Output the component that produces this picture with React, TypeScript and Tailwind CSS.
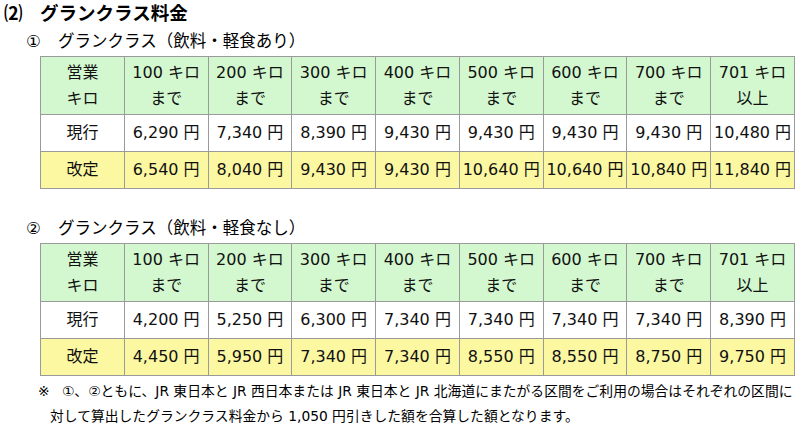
import React from 'react';

const FONT = "font-['DejaVu_Sans','Noto_Sans_CJK_JP',sans-serif]";

const HEADERS: [string, string][] = [
  ['100 キロ', 'まで'],
  ['200 キロ', 'まで'],
  ['300 キロ', 'まで'],
  ['400 キロ', 'まで'],
  ['500 キロ', 'まで'],
  ['600 キロ', 'まで'],
  ['700 キロ', 'まで'],
  ['701 キロ', '以上'],
];

interface FareTableProps {
  current: string[];
  revised: string[];
}

function FareTable({ current, revised }: FareTableProps) {
  const cell = 'border border-[#9a9a9a] text-center whitespace-nowrap p-0';
  return (
    <table className="table-fixed border-collapse w-[755px] ml-[40px] text-[16px] text-[#111]">
      <tbody>
        <tr className="bg-[#d3f8cf] h-[58px]">
          <td className={`${cell} leading-[26px]`}>
            <div>営業</div>
            <div>キロ</div>
          </td>
          {HEADERS.map(([a, b]) => (
            <td key={a} className={`${cell} leading-[26px]`}>
              <div>{a}</div>
              <div>{b}</div>
            </td>
          ))}
        </tr>
        <tr className="bg-white h-[37px]">
          <td className={cell}>現行</td>
          {current.map((v, i) => (
            <td key={i} className={cell}>{v}</td>
          ))}
        </tr>
        <tr className="bg-[#fcf8a2] h-[37px]">
          <td className={cell}>改定</td>
          {revised.map((v, i) => (
            <td key={i} className={cell}>{v}</td>
          ))}
        </tr>
      </tbody>
    </table>
  );
}

export default function App() {
  return (
    <div className={`${FONT} w-[800px] h-[426px] bg-white text-black overflow-hidden`}>
      <div className="flex items-center h-[28px] pl-[4px] text-[18.5px] font-bold">
        <span className="w-[36px]">⑵</span>
        <span>グランクラス料金</span>
      </div>
      <div className="flex items-center h-[28px] pl-[26px] text-[16.5px]">
        <span className="w-[32px]">①</span>
        <span>グランクラス（飲料・軽食あり）</span>
      </div>
      <FareTable
        current={['6,290 円', '7,340 円', '8,390 円', '9,430 円', '9,430 円', '9,430 円', '9,430 円', '10,480 円']}
        revised={['6,540 円', '8,040 円', '9,430 円', '9,430 円', '10,640 円', '10,640 円', '10,840 円', '11,840 円']}
      />
      <div className="flex items-center h-[28px] mt-[26px] pl-[26px] text-[16.5px]">
        <span className="w-[32px]">②</span>
        <span>グランクラス（飲料・軽食なし）</span>
      </div>
      <FareTable
        current={['4,200 円', '5,250 円', '6,300 円', '7,340 円', '7,340 円', '7,340 円', '7,340 円', '8,390 円']}
        revised={['4,450 円', '5,950 円', '7,340 円', '7,340 円', '8,550 円', '8,550 円', '8,750 円', '9,750 円']}
      />
      <div className="pl-[38px] pt-[3px] text-[13.8px] leading-[25px]">
        <div className="flex">
          <span className="w-[24px]">※</span>
          <span>①、②ともに、JR 東日本と JR 西日本または JR 東日本と JR 北海道にまたがる区間をご利用の場合はそれぞれの区間に</span>
        </div>
        <div className="pl-[12px]">対して算出したグランクラス料金から 1,050 円引きした額を合算した額となります。</div>
      </div>
    </div>
  );
}
